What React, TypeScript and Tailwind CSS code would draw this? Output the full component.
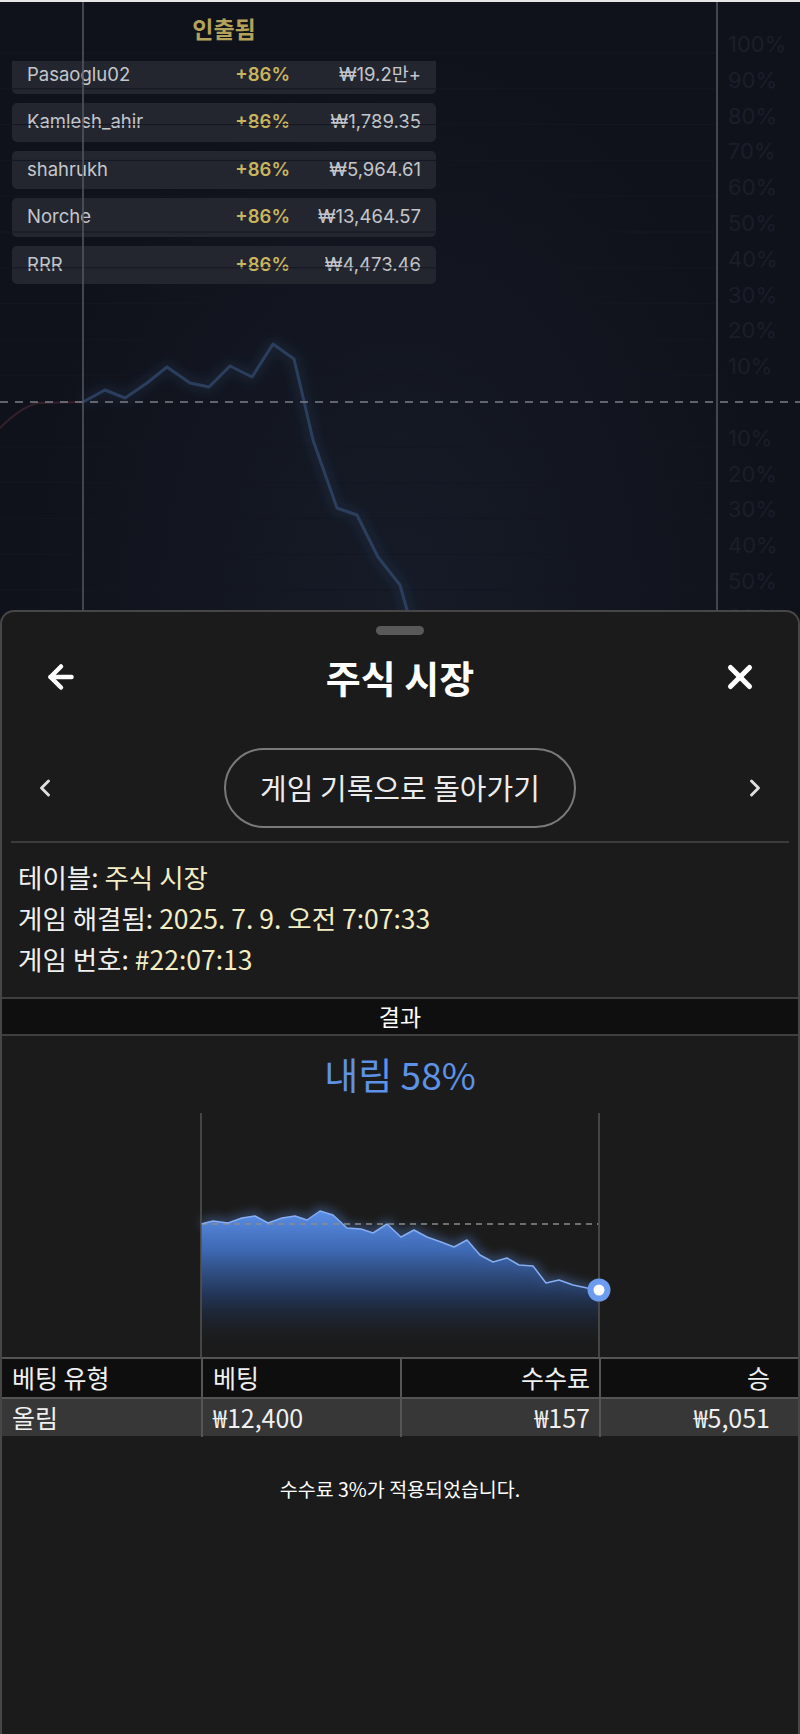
import { ArrowLeft, X, ChevronLeft, ChevronRight } from 'lucide-react';

const players = [
  { name: 'Pasaoglu02', pct: '+86%', amount: '₩19.2만+' },
  { name: 'Kamlesh_ahir', pct: '+86%', amount: '₩1,789.35' },
  { name: 'shahrukh', pct: '+86%', amount: '₩5,964.61' },
  { name: 'Norche', pct: '+86%', amount: '₩13,464.57' },
  { name: 'RRR', pct: '+86%', amount: '₩4,473.46' },
];

// background game chart (page coords)
const bgLine = [
  [83, 402], [105, 390], [125, 398], [147, 383], [167, 367], [190, 383], [209, 387],
  [230, 366], [252, 377], [273, 344], [294, 359], [303, 397], [313, 440], [337, 508],
  [357, 515], [378, 557], [400, 585], [407, 610], [415, 640],
];

// result chart in the sheet (page coords too, via viewBox)
const resultLine = [
  [201, 1224], [213, 1221], [228, 1223], [242, 1218], [255, 1216], [268, 1223], [282, 1218],
  [295, 1216], [307, 1220], [320, 1211], [333, 1215], [347, 1228], [361, 1229], [373, 1233],
  [387, 1224], [401, 1237], [414, 1230], [427, 1237], [441, 1242], [454, 1247], [467, 1240],
  [480, 1255], [493, 1262], [507, 1258], [519, 1265], [533, 1266], [546, 1283], [559, 1280],
  [573, 1285], [587, 1288], [599, 1290],
];

const toPts = (p: number[][]) => p.map(([x, y]) => `${x},${y}`).join(' ');

const upper = ['100%', '90%', '80%', '70%', '60%', '50%', '40%', '30%', '20%', '10%'];
const lower = ['10%', '20%', '30%', '40%', '50%', '60%'];

const BackgroundChart = () => (
  <svg className="pointer-events-none absolute left-0 top-0" width="800" height="640" viewBox="0 0 800 640">
    <defs>
      <filter id="bgGlow" x="-20%" y="-20%" width="140%" height="140%">
        <feGaussianBlur stdDeviation="6" />
      </filter>
    </defs>
    {upper.map((l, i) => {
      const y = 402 - 35.8 * (10 - i);
      return (
        <g key={'u' + l}>
          <line x1="0" x2="716" y1={y + 9} y2={y + 9} stroke="#141723" strokeWidth="1" />
          <text x="728" y={y + 8} fontFamily="Inter, sans-serif" fontSize="22" fill="#1a1e2a">{l}</text>
        </g>
      );
    })}
    {lower.map((l, i) => {
      const y = 402 + 35.8 * (i + 1);
      return (
        <g key={'l' + l}>
          <line x1="0" x2="716" y1={y + 9} y2={y + 9} stroke="#141723" strokeWidth="1" />
          <text x="728" y={y + 8} fontFamily="Inter, sans-serif" fontSize="22" fill="#1a1e2a">{l}</text>
        </g>
      );
    })}
    <path d="M0 428 Q 20 408 37 403 L 83 402" fill="none" stroke="#35202a" strokeWidth="2" />
    <polyline points={toPts(bgLine)} fill="none" stroke="#3d5a86" strokeOpacity="0.2" strokeWidth="10" filter="url(#bgGlow)" />
    <polyline points={toPts(bgLine)} fill="none" stroke="#2b3e5d" strokeWidth="3" strokeLinejoin="round" />
    <line x1="0" x2="800" y1="402" y2="402" stroke="#7b7f88" strokeWidth="1.5" strokeDasharray="8 7" />
    <line x1="83" x2="83" y1="2" y2="640" stroke="#545863" strokeWidth="1.5" />
    <line x1="717" x2="717" y1="2" y2="640" stroke="#545863" strokeWidth="1.5" />
  </svg>
);

const ResultChart = () => {
  const area = `M201 1357 L ${resultLine.map(([x, y]) => `${x} ${y}`).join(' L ')} L 599 1357 Z`;
  return (
    <svg width="796" height="244" viewBox="2 1113 796 244" className="block">
      <defs>
        <linearGradient id="areaFill" x1="0" y1="1208" x2="0" y2="1350" gradientUnits="userSpaceOnUse">
          <stop offset="0" stopColor="#5d91ea" stopOpacity="1" />
          <stop offset="0.3" stopColor="#3f6cba" stopOpacity="0.95" />
          <stop offset="0.65" stopColor="#22365a" stopOpacity="0.8" />
          <stop offset="1" stopColor="#1b1b1b" stopOpacity="0" />
        </linearGradient>
        <filter id="lineGlow" x="-10%" y="-50%" width="120%" height="200%">
          <feGaussianBlur stdDeviation="5" />
        </filter>
      </defs>
      <polyline points={toPts(resultLine)} fill="none" stroke="#5d91ea" strokeOpacity="0.4" strokeWidth="8" filter="url(#lineGlow)" />
      <path d={area} fill="url(#areaFill)" />
      <line x1="201" x2="599" y1="1224" y2="1224" stroke="#8c8c8c" strokeWidth="1.5" strokeDasharray="6 5" />
      <polyline points={toPts(resultLine)} fill="none" stroke="#86adf2" strokeWidth="1.5" strokeLinejoin="round" />
      <line x1="201" x2="201" y1="1113" y2="1357" stroke="#555555" strokeWidth="1.5" />
      <line x1="599" x2="599" y1="1113" y2="1357" stroke="#555555" strokeWidth="1.5" />
      <circle cx="599" cy="1290" r="11.5" fill="#6b9cf0" />
      <circle cx="599" cy="1290" r="5.5" fill="#ffffff" />
    </svg>
  );
};

export default function App() {
  return (
    <div className="relative h-[1734px] w-[800px] overflow-hidden bg-[#10121b] font-['Inter','Noto_Sans_CJK_KR',sans-serif]">
      <div className="h-[2px] bg-[#e6e6e6]" />

      {/* game background */}
      <div className="h-[608px] bg-[radial-gradient(ellipse_at_50%_100%,_#161b27_0%,_#10121b_65%)]">
        <div className="w-[448px]">
          <p className="pt-[15px] text-center text-[23px] leading-[26px] font-bold text-[#b5a25a]">인출됨</p>
          <div className="mt-[18px] h-[223px] overflow-hidden">
            <div className="-mt-[5.5px] flex flex-col gap-[9px]">
              {players.map((p) => (
                <div
                  key={p.name}
                  className="ml-[12px] grid h-[38.5px] w-[424px] grid-cols-[1fr_100px_131px] items-center rounded-[5px] bg-[#23262f] pl-[15px] pr-[15px] text-[18.5px]"
                >
                  <span className="text-[#c4c6cb]">{p.name}</span>
                  <span className="text-right font-semibold text-[#c9b55f]">{p.pct}</span>
                  <span className="text-right text-[#c4c6cb]">{p.amount}</span>
                </div>
              ))}
            </div>
          </div>
        </div>
      </div>

      <BackgroundChart />

      {/* result sheet */}
      <div className="absolute bottom-0 left-0 right-0 top-[610px] flex flex-col rounded-t-[14px] border-2 border-b-0 border-[#464646] bg-[#1b1b1b] font-['Noto_Sans_CJK_KR',sans-serif] text-[#f0f0f0]">
        <div className="mx-auto mt-[14px] h-[9px] w-[48px] rounded-full bg-[#595959]" />

        <div className="mt-[12px] flex h-[60px] items-center justify-between pl-[41px] pr-[39px]">
          <ArrowLeft size={36} strokeWidth={3} className="text-white" />
          <h1 className="text-[38px] font-bold leading-none text-white">주식 시장</h1>
          <X size={38} strokeWidth={3.2} className="text-white" />
        </div>

        <div className="mt-[41px] flex items-center justify-between pl-[29px] pr-[29px]">
          <ChevronLeft size={28} strokeWidth={2.5} className="text-[#e0e0e0]" />
          <button className="flex h-[80px] w-[352px] items-center justify-center rounded-full border-2 border-[#7a7a7a] text-[29px] text-[#ececec]">
            게임 기록으로 돌아가기
          </button>
          <ChevronRight size={28} strokeWidth={2.5} className="text-[#e0e0e0]" />
        </div>

        <div className="mx-[9px] mt-[13px] h-[2px] bg-[#3b3b3b]" />

        <div className="pl-[16px] pt-[13px] text-[26.5px] leading-[41px]">
          <p>
            테이블: <span className="text-[#f3edc4]">주식 시장</span>
          </p>
          <p>
            게임 해결됨: <span className="text-[#f3edc4]">2025. 7. 9. 오전 7:07:33</span>
          </p>
          <p>
            게임 번호: <span className="text-[#f3edc4]">#22:07:13</span>
          </p>
        </div>

        <div className="mt-[18px] flex h-[39px] items-center justify-center border-y-2 border-[#3f3f3f] bg-[#0f0f0f] text-[23px] text-white">
          결과
        </div>

        <div className="flex h-[77px] items-center justify-center text-[37px] text-[#5e92e6]">내림 58%</div>

        <ResultChart />

        <div className="border-t-2 border-[#555] text-[25px]">
          <div className="grid h-[38px] grid-cols-4 bg-[#0e0e0e]">
            <div className="flex items-center pl-[10px]">베팅 유형</div>
            <div className="flex items-center border-l-2 border-[#555] pl-[10px]">베팅</div>
            <div className="flex items-center justify-end border-l-2 border-[#555] pr-[9px]">수수료</div>
            <div className="flex items-center justify-end border-l-2 border-[#555] pr-[28px]">승</div>
          </div>
          <div className="grid h-[39px] grid-cols-4 border-t-2 border-[#555] bg-[#373737]">
            <div className="flex items-center pl-[10px]">올림</div>
            <div className="flex items-center border-l-2 border-[#555] pl-[10px]">₩12,400</div>
            <div className="flex items-center justify-end border-l-2 border-[#555] pr-[9px]">₩157</div>
            <div className="flex items-center justify-end border-l-2 border-[#555] pr-[28px]">₩5,051</div>
          </div>
        </div>

        <p className="mt-[41px] text-center text-[19.5px] leading-[24px] text-white">수수료 3%가 적용되었습니다.</p>
      </div>
    </div>
  );
}
